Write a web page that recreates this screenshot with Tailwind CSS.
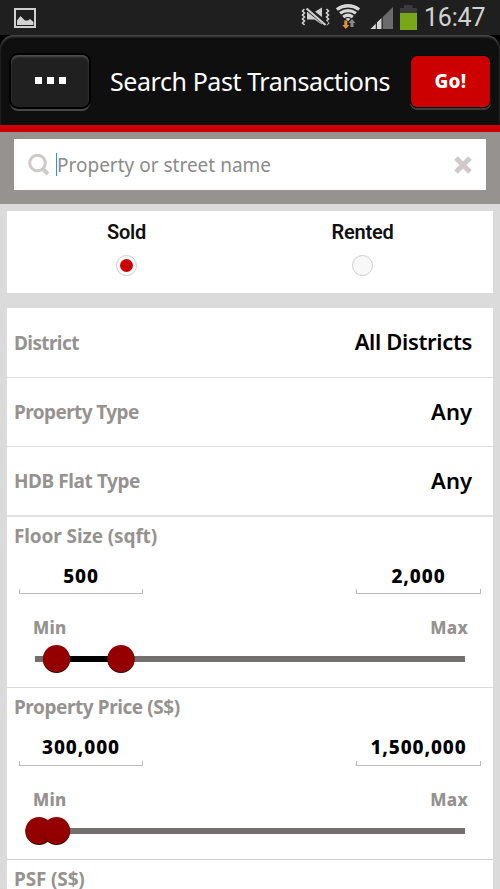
<!DOCTYPE html>
<html lang="en">
<head>
<meta charset="utf-8">
<title>Search Past Transactions</title>
<script src="https://cdn.jsdelivr.net/npm/@tailwindcss/browser@4"></script>
</head>
<body class="w-[500px] h-[889px] overflow-hidden bg-[#dbdbdb] font-['Noto_Sans',sans-serif] text-black">
<div class="h-[889px] flex flex-col overflow-hidden">
  <div class="h-[35px] shrink-0 bg-[#1f1f1f] flex items-center pl-[14px] pr-[15px]">
    <svg class="w-[22px] h-[20px]" viewBox="0 0 22 20"><rect x="1" y="1" width="20" height="18" fill="none" stroke="#cfcfcf" stroke-width="2"/><path d="M3 17v-4.500L6.500 8l4.500 4.500 3 0 2-1.500 3.500 3v3z" fill="#d2d2d2"/></svg>
    <svg class="ml-auto w-[118px] h-[35px]" viewBox="300 0 118 35">
      <g fill="none" stroke="#cfcfcf" stroke-width="1.600"><path d="M304.500 9l-2 2 2 2-2 2 2 2-2 2 2 2-2 2 2 2"/><path d="M326.500 9l2 2-2 2 2 2-2 2 2 2-2 2 2 2-2 2"/></g>
      <path d="M307 12h7.500l7.500-4.500v17l-7.500-5H307z" fill="#cfcfcf"/><path d="M306 7.500l21 17" stroke="#1f1f1f" stroke-width="5"/><path d="M306.500 8.500l19 16.500" stroke="#cfcfcf" stroke-width="2.200"/>
      <g fill="none" stroke="#d6d6d6" stroke-width="3.200"><path d="M336.800 9.500q11.200-7.500 22.400 0"/><path d="M340 13.300q8-5.500 16 0"/><path d="M343.200 17q4.800-3.500 9.600 0"/></g><path d="M345.500 18.800q2.500-1.500 5 0l-2.500 2.400z" fill="#d2d2d2"/>
      <path d="M344.300 20.500h3v4.500h2l-3.500 4-3.500-4h2z" fill="#dc9640"/><path d="M350.500 27h3v-4h2l-3.500-4-3.500 4h2z" fill="#8a8a8a"/>
      <path d="M370.500 29L393 7v22z" fill="#6b6b6b"/><path d="M370.500 29l5.500-5.500V29zM377 29v-6.500l4.500-4.500v11z" fill="#d6d6d6"/><path d="M376.300 22v7M382.200 17v12" stroke="#222"/>
      <path d="M404 5h8.500v3h4.500v5h-17V8h4z" fill="#3b3b3b"/><path d="M400 13h17v17h-17z" fill="#78a818"/>
    </svg>
    <span class="ml-[6px] w-[61px] text-right whitespace-nowrap font-[Roboto] text-[25px] leading-[35px] tracking-[-0.2px] text-[#d2d2d2]">16:47</span>
  </div>
  <div class="h-[90px] shrink-0 bg-black"><header class="h-[90px] rounded-t-[14px] bg-[#0f0f0f] shadow-[inset_0_2px_2px_#484848] flex items-center pl-[11px] pr-[10px]">
    <button class="mt-[1px] w-[78px] h-[52px] rounded-[7px] bg-[#202020] shadow-[inset_0_2px_2px_#4c4c4c,0_0_0_2px_#000,0_3px_0_1px_#474747] flex items-center justify-center gap-[5px]"><i class="size-[7px] bg-white"></i><i class="size-[7px] bg-white"></i><i class="size-[7px] bg-white"></i></button>
    <h1 class="w-[322px] text-center whitespace-nowrap text-white text-[25px] tracking-[-0.43px] leading-8 mt-[1px]">Search Past Transactions</h1>
    <button class="mt-[2px] w-[79px] h-[51px] rounded-[6px] bg-[#cc0000] shadow-[0_0_0_1px_#000,0_2px_0_1px_#3d3d3d] text-white font-extrabold text-[19px] tracking-[0.3px]">Go!</button>
  </header></div>
  <div class="h-[7px] shrink-0 bg-[#cc0000]"></div>
  <div class="h-[72px] shrink-0 bg-[#969290] px-[14px] pt-[7px]">
    <div class="h-[51px] bg-white flex items-center pl-[13px] pr-[14px]">
      <svg class="size-[22px]" viewBox="0 0 22 22"><circle cx="10.500" cy="9" r="7.800" fill="none" stroke="#cfc9c9" stroke-width="3"/><path d="M15.500 14.500l5.500 5.500" stroke="#cfc9c9" stroke-width="4"/></svg>
      <i class="ml-[7px] w-px h-[23px] bg-[#2891f5]"></i>
      <span class="pt-px text-[19px] text-[#8b8b8b] whitespace-nowrap">Property or street name</span>
      <svg class="ml-auto size-[18px]" viewBox="0 0 18 18"><path d="M2 2l14 14M16 2L2 16" stroke="#cfc9c9" stroke-width="5"/></svg>
    </div>
  </div>
  <div class="h-[7px] shrink-0"></div>
  <section class="mx-[7px] h-[82px] shrink-0 bg-white flex font-[Roboto] font-semibold text-[20px] tracking-[-0.2px] text-[#111]">
    <label class="ml-[2px] w-[235px] flex flex-col items-center pt-[7px]"><span class="leading-[29px]">Sold</span><i class="mt-[8px] size-[21px] rounded-full border border-[#ccc] bg-[#fcfcfc] flex items-center justify-center"><i class="size-[13px] rounded-full bg-[#cc0000]"></i></i></label>
    <label class="w-[237px] flex flex-col items-center pt-[7px]"><span class="leading-[29px]">Rented</span><i class="mt-[8px] size-[21px] rounded-full border border-[#d0cccc] bg-[#f8f8f8]"></i></label>
  </section>
  <div class="h-[15px] shrink-0"></div>
  <main class="mx-[7px] h-[600px] shrink-0 bg-white">
    <div class="h-[70px] border-b-[1.500px] border-[#dbdbdb] flex items-center justify-between pl-[7px] pr-[21px]"><span class="pt-px font-bold text-[19px] tracking-[-0.6px] text-[#969290]">District</span><span class="pb-[2px] font-semibold text-[22px] tracking-[-0.33px]">All Districts</span></div>
    <div class="h-[69px] border-b border-[#dbdbdb] flex items-center justify-between pl-[7px] pr-[21px]"><span class="font-bold text-[19px] tracking-[-0.6px] text-[#969290]">Property Type</span><span class="pb-[2px] font-semibold text-[22px]">Any</span></div>
    <div class="h-[70px] border-b-2 border-[#e2e2e2] flex items-center justify-between pl-[7px] pr-[21px]"><span class="pt-px font-bold text-[19px] tracking-[-0.42px] text-[#969290]">HDB Flat Type</span><span class="pb-[2px] font-semibold text-[22px]">Any</span></div>
    <div class="h-[171px] border-b border-[#dbdbdb] pt-[5px]">
      <h2 class="pl-[7px] font-bold text-[19px] tracking-[-0.12px] leading-[28px] text-[#969290]">Floor Size (sqft)</h2>
      <div class="mt-[13px] flex justify-between px-[12px] font-extrabold text-[19px] tracking-[0.9px] leading-[26px] text-center">
        <div class="w-[124px]">500<div class="h-[5px] border border-t-0 border-[#bcbcbc]"></div></div><div class="w-[125px]">2,000<div class="h-[5px] border border-t-0 border-[#bcbcbc]"></div></div></div>
      <div class="mt-[22px] flex justify-between pl-[26px] pr-[25px] font-extrabold text-[17px] tracking-[0.3px] leading-6 text-[#969290]"><span>Min</span><span>Max</span></div>
      <svg class="block mt-[4px] w-[486px] h-[30px]" viewBox="0 0 486 30"><path d="M28 15h430" stroke="#746f6f" stroke-width="6"/><path d="M50 15h64" stroke="#000" stroke-width="6"/><g fill="#350000"><circle cx="49.500" cy="15.500" r="13.600"/><circle cx="114" cy="15.500" r="13.600"/></g><g fill="#940000"><circle cx="49.500" cy="14.500" r="13.600"/><circle cx="114" cy="14.500" r="13.600"/></g></svg>
    </div>
    <div class="h-[172px] border-b border-[#cfcfcf] pt-[5px]">
      <h2 class="pl-[7px] font-bold text-[19px] tracking-[-0.43px] leading-[28px] text-[#969290]">Property Price (S$)</h2>
      <div class="mt-[13px] flex justify-between px-[12px] font-extrabold text-[19px] tracking-[0.9px] leading-[27px] text-center">
        <div class="w-[124px]">300,000<div class="h-[5px] border border-t-0 border-[#bcbcbc]"></div></div><div class="w-[125px]">1,500,000<div class="h-[5px] border border-t-0 border-[#bcbcbc]"></div></div></div>
      <div class="mt-[22px] flex justify-between pl-[26px] pr-[25px] font-extrabold text-[17px] tracking-[0.3px] leading-6 text-[#969290]"><span>Min</span><span>Max</span></div>
      <svg class="block mt-[4px] w-[486px] h-[30px]" viewBox="0 0 486 30"><path d="M28 15h430" stroke="#746f6f" stroke-width="6"/><circle cx="32" cy="15.500" r="13.600" fill="#350000"/><circle cx="32" cy="14.500" r="13.600" fill="#940000"/><circle cx="49.500" cy="15.500" r="13.600" fill="#350000"/><circle cx="49.500" cy="14.500" r="13.600" fill="#940000"/></svg>
    </div>
    <h2 class="pt-[5px] pl-[7px] font-bold text-[19px] tracking-[-0.15px] leading-[28px] text-[#969290]">PSF (S$)</h2>
  </main>
</div>
</body>
</html>
